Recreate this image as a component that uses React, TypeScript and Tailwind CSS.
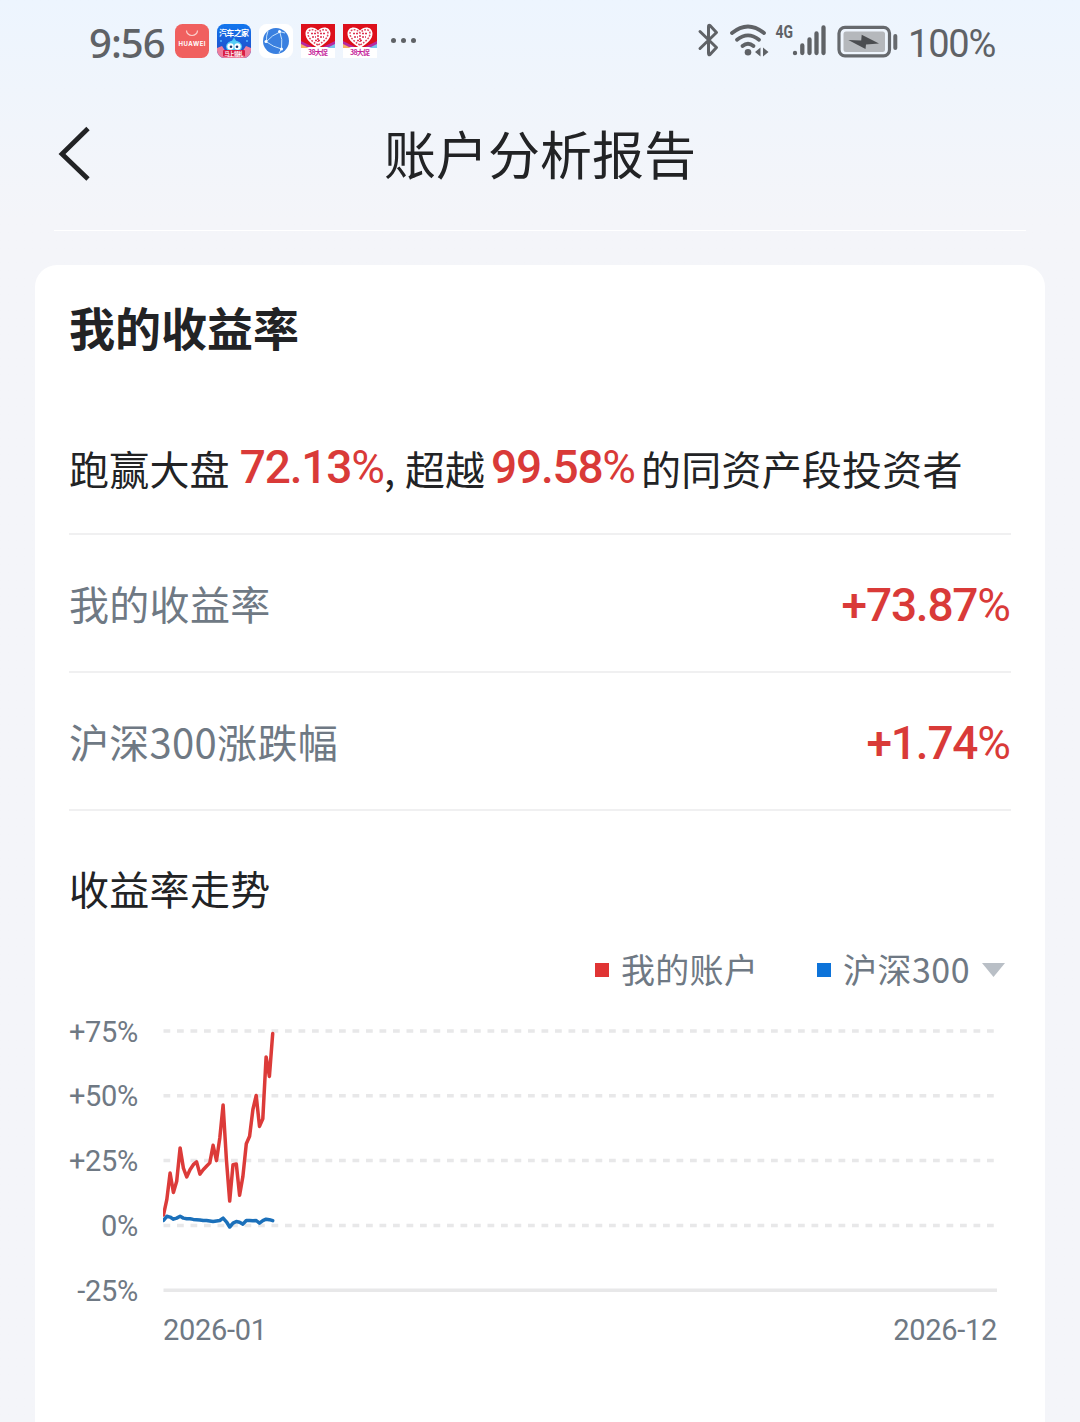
import React from 'react';

const GRID_LABELS = ['+75%', '+50%', '+25%', '0%', '-25%'];

const ACCOUNT = [
  4, 9.9, 20.2, 12.7, 17, 29.9, 22.1, 18.7, 21.5, 23.4, 24.5, 19.8, 21.5, 22.8, 24.1, 30.9, 25,
  33.7, 46.5, 25.4, 9.4, 23.4, 23.7, 11.6, 18.9, 31.5, 34.4, 44.7, 50.1, 38.2, 41.1, 65, 57.5, 74,
];

const CSI300 = [
  1.9, 3.5, 3.2, 2.4, 2.8, 3.5, 2.8, 2.6, 2.6, 2.3, 2.2, 2.1, 1.9, 1.9, 1.7, 1.5, 1.7, 1.9, 2.8,
  1.4, -0.6, 0.9, 1.5, 1.2, 0.5, 1.9, 1.9, 1.8, 1.9, 0.9, 1.8, 2.4, 2.2, 1.8,
];

const STEP_X = 3.31;
const ROW_HEIGHT = 64.8;

const toPoints = (values: number[]) =>
  values
    .map((v, i) => `${(0.5 + i * STEP_X).toFixed(1)},${(32 + ((75 - v) / 25) * ROW_HEIGHT).toFixed(1)}`)
    .join(' ');

const HuaweiIcon = () => (
  <svg className="h-[34px] w-[34px]" viewBox="0 0 34 34">
    <rect width="34" height="34" rx="7.5" fill="#f0605f" />
    <path d="M11.5 6.5a5.5 5 0 0 0 11 0" fill="none" stroke="#fbd0cd" strokeWidth="1.2" />
    <text x="17" y="21.6" textAnchor="middle" fontSize="6" fontWeight="700" fill="#fff" textLength="27" fontFamily="Inter, sans-serif">
      HUAWEI
    </text>
  </svg>
);

const AutohomeIcon = () => (
  <svg className="h-[34px] w-[34px]" viewBox="0 0 34 34">
    <defs>
      <linearGradient id="auto-bg" x1="0" y1="0" x2="0" y2="1">
        <stop offset="0" stopColor="#1277ee" />
        <stop offset="1" stopColor="#2447c4" />
      </linearGradient>
      <clipPath id="auto-clip">
        <rect width="34" height="34" rx="7.5" />
      </clipPath>
    </defs>
    <g clipPath="url(#auto-clip)">
      <rect width="34" height="34" fill="url(#auto-bg)" />
      <circle cx="4" cy="17" r="1" fill="#58b7ff" />
      <circle cx="30" cy="17" r="1" fill="#58b7ff" />
      <path d="M17 13.5l2.5 4h-5z" fill="#42c7f5" />
      <ellipse cx="17" cy="22.5" rx="8" ry="6" fill="#55cbf5" />
      <ellipse cx="13.5" cy="22.5" rx="3.2" ry="3.3" fill="#fff" />
      <ellipse cx="20.5" cy="22.5" rx="3.2" ry="3.3" fill="#fff" />
      <circle cx="14" cy="22.8" r="1.3" fill="#183873" />
      <circle cx="20" cy="22.8" r="1.3" fill="#183873" />
      <path d="M0 24l5-2 3 4.500h18l3-4.500 5 2v10H0z" fill="#ee7d9c" />
      <rect x="6" y="26" width="22" height="6.5" rx="1" fill="#d81e45" />
    </g>
    <text x="17" y="11.6" textAnchor="middle" fontSize="8" fontWeight="700" fill="#fff" textLength="30" fontFamily="'Noto Sans CJK SC', sans-serif">
      汽车之家
    </text>
    <text x="17" y="31.6" textAnchor="middle" fontSize="5.2" fontWeight="700" fill="#fff" textLength="19" fontFamily="'Noto Sans CJK SC', sans-serif">
      马上领礼
    </text>
  </svg>
);

const BrowserIcon = () => (
  <svg className="h-[34px] w-[34px]" viewBox="0 0 34 34">
    <rect width="34" height="34" rx="7.5" fill="#fff" />
    <circle cx="17" cy="17" r="13" fill="#3a80e0" />
    <g fill="none" stroke="#c5e2fc" strokeWidth="1">
      <path d="M9 7Q7 12 7.500 17.500Q13 11 21 8" />
      <path d="M20.500 7Q24 15 22.500 25Q14 23 7 17.500" />
      <path d="M26 9L20.500 7.500M22.500 25L20 29" />
    </g>
    <circle cx="20.500" cy="7.500" r="1.500" fill="#fff" />
    <circle cx="7" cy="17.500" r="1.500" fill="#fff" />
    <circle cx="22.500" cy="25" r="1.500" fill="#fff" />
  </svg>
);

const PromoIcon = () => (
  <svg className="h-[34px] w-[34px]" viewBox="0 0 34 34">
    <rect width="34" height="34" fill="#fff" />
    <path d="M0 0h34v20l-8 3H8l-8-3z" fill="#dd101b" />
    <path d="M0 17l12 6H0z" fill="#b62aa0" />
    <path d="M34 17l-12 6h12z" fill="#b62aa0" />
    <path d="M0 20l8 4H0z" fill="#f7b267" />
    <path d="M34 20l-8 4h8z" fill="#79c5ec" />
    <path d="M17 24C9 19 4.500 15 4.500 9.500C4.500 2.500 13 1.500 17 6.500C21 1.500 29.500 2.500 29.500 9.500C29.500 15 25 19 17 24z" fill="#fff" />
    <path
      d="M17 21C10 17 7 13 7 9.500C7 5 13 4 17 9C21 4 27 5 27 9.500C27 13 24 17 17 21z"
      fill="none"
      stroke="#e0455c"
      strokeWidth="1.500"
      strokeDasharray="1.800 1.300"
    />
    <path d="M10 9.500h5M19 9.500h5M11 13h4M19 13h4M14 16.500h6M17 11v7" stroke="#dd3050" strokeWidth="1.500" strokeDasharray="2 1" />
    <text x="17" y="31" textAnchor="middle" fontSize="7" fontWeight="700" fill="#c5269b" textLength="20" fontFamily="'Noto Sans CJK SC', sans-serif">
      38大促
    </text>
  </svg>
);

const StatusIcons = () => (
  <svg className="h-[44px] w-[202px]" viewBox="0 0 202 44" fill="none">
    {/* bluetooth */}
    <path
      d="M3 11.500L19.500 27.500L13 34.500Q11.500 35.500 11.500 33V7Q11.500 4.500 13 5.500L19.500 12.500L3 28.500"
      stroke="#5f6266"
      strokeWidth="3"
      strokeLinecap="round"
      strokeLinejoin="round"
    />
    {/* wifi */}
    <g stroke="#5f6266" strokeWidth="3.800" strokeLinecap="round">
      <path d="M35 13Q51 0 67 13" />
      <path d="M40 19.800Q51 11 62 19.800" />
      <path d="M45.500 26Q51 21.500 56.500 26" />
    </g>
    <circle cx="51" cy="32.300" r="3.300" fill="#5f6266" />
    <path d="M63.500 27.500v9l-5.500-4.500zM66 27.500v9l5.500-4.500z" fill="#5f6266" />
    {/* mobile signal */}
    <text x="78.500" y="18" fontSize="19" fontWeight="700" fill="#5f6266" textLength="17.500" lengthAdjust="spacingAndGlyphs" fontFamily="Roboto, sans-serif">
      4G
    </text>
    <g stroke="#5f6266" strokeWidth="4.300" strokeLinecap="round">
      <path d="M98 33v.2M105.300 25.500v7.500M112.500 19.500v13.500M119.500 13.500v19.500M126.500 7.500v25.500" />
    </g>
    {/* battery */}
    <rect x="142" y="7.300" width="50.500" height="28.500" rx="6" stroke="#66696d" strokeWidth="3.200" />
    <rect x="146.500" y="11.500" width="41.500" height="20.500" rx="2.500" fill="#b5b8bc" />
    <path d="M151.300 20L164.200 20.500L164.700 14.800L182 23.500L169 24.500L168.500 29z" fill="#4b4d50" />
    <path d="M198.300 16v12" stroke="#66696d" strokeWidth="4" strokeLinecap="round" />
  </svg>
);

const StatusBar = () => (
  <div className="flex h-[84px] items-center justify-between pl-[89px] pr-[85px] font-['Noto_Sans',sans-serif] text-[40px] text-[#5f6266]">
    <div className="flex items-center">
      <span className="mt-[2px] w-[86px] font-medium tracking-[-1px]">9:56</span>
      <div className="-mt-[3px] flex gap-2">
        <HuaweiIcon />
        <AutohomeIcon />
        <BrowserIcon />
        <PromoIcon />
        <PromoIcon />
      </div>
      <div className="-mt-[3px] ml-[14px] flex gap-[5px]">
        <span className="h-[5px] w-[5px] rounded-full bg-[#5f6266]" />
        <span className="h-[5px] w-[5px] rounded-full bg-[#5f6266]" />
        <span className="h-[5px] w-[5px] rounded-full bg-[#5f6266]" />
      </div>
    </div>
    <div className="flex items-center">
      <StatusIcons />
      <span className="ml-[9px] mt-[4px] w-[87px] whitespace-nowrap font-[Roboto,sans-serif] text-[38px] tracking-[-1.200px]">100%</span>
    </div>
  </div>
);

// number in medium weight, percent sign in regular
const Rate = ({ value, className = '' }: { value: string; className?: string }) => (
  <span className={`font-[Roboto,sans-serif] text-[46px] font-medium tracking-[-1.200px] text-[#d93a38] ${className}`}>
    {value}
    <span className="font-normal tracking-[-1px]">%</span>
  </span>
);

const RateRow = ({ label, value }: { label: string; value: string }) => (
  <div className="flex h-[138px] items-center justify-between border-b-2 border-[#f0f0f1]">
    <span className="text-[40px] tracking-[0.300px] text-[#6f7984]">{label}</span>
    <Rate value={value} className="mr-[1px] mt-[4px]" />
  </div>
);

const Legend = () => (
  <div className="flex h-[46px] items-center justify-end pr-[6px] text-[34px] text-[#6f7984]">
    <span className="mr-[12px] mt-[6px] h-[14px] w-[14px] bg-[#e03434]" />
    <span className="mt-[2px] w-[196px] tracking-[0.300px]">我的账户</span>
    <span className="mr-[12px] mt-[6px] h-[14px] w-[14px] bg-[#0d73d9]" />
    <span className="mt-[2px] w-[139px] tracking-[0.500px]">沪深300</span>
    <svg className="mt-[6px] h-[14px] w-[23px]" viewBox="0 0 23 14">
      <path d="M0 0h23L11.500 14z" fill="#b9bfc6" />
    </svg>
  </div>
);

const TrendChart = () => (
  <div className="mt-[9px] font-[Roboto,sans-serif] text-[29px] text-[#6f7984]">
    <div className="flex">
      <div className="flex w-[69px] flex-col pt-px text-right">
        {GRID_LABELS.map((label) => (
          <span key={label} className="flex h-[64.8px] items-center justify-end whitespace-nowrap tracking-[-0.300px]">
            {label}
          </span>
        ))}
      </div>
      <svg className="ml-[25px] h-[324px] w-[835px]" viewBox="0 0 835 324" fill="none">
        {GRID_LABELS.map((label, i) => (
          <path
            key={label}
            d={`M0.500 ${32 + i * ROW_HEIGHT}H834`}
            stroke="#e8e8e9"
            strokeWidth="3.500"
            strokeDasharray={i < 4 ? '6.75 6.75' : undefined}
          />
        ))}
        <polyline points={toPoints(ACCOUNT)} stroke="#dc3b39" strokeWidth="3.500" strokeLinejoin="round" strokeLinecap="round" />
        <polyline points={toPoints(CSI300)} stroke="#1b70ba" strokeWidth="3.500" strokeLinejoin="round" strokeLinecap="round" />
      </svg>
    </div>
    <div className="-mt-[10px] flex justify-between pl-[94px] pr-[14px] leading-[32px] tracking-[-0.300px]">
      <span>2026-01</span>
      <span>2026-12</span>
    </div>
  </div>
);

const App = () => {
  return (
    <div className="flex h-[1422px] w-[1080px] flex-col overflow-hidden bg-[#f3f5fa] bg-linear-to-b from-[#edf5fe] to-[#f4f5f9] to-[220px] font-['Noto_Sans_CJK_SC',sans-serif] text-[#222325]">
      <StatusBar />
      <header className="mx-[54px] flex h-[147px] items-center justify-between border-b border-white pb-[7px]">
        <svg className="h-[60px] w-[40px]" viewBox="0 0 40 60" fill="none">
          <path d="M34 4.500L8 30L34 55" stroke="#222325" strokeWidth="4.800" />
        </svg>
        <h1 className="-mt-[2px] text-[52px]">账户分析报告</h1>
        <span className="w-[40px]" />
      </header>
      <main className="mx-[35px] mt-[34px] flex-1 rounded-t-[22px] bg-white px-[34px]">
        <h2 className="flex h-[120px] items-center pt-[2px] text-[46px] font-bold">我的收益率</h2>
        <div className="flex h-[150px] items-center whitespace-nowrap border-b-2 border-[#f0f0f1] pt-[17px] text-[40px]">
          <span className="tracking-[0.200px]">跑赢大盘</span>
          <Rate value="72.13" className="ml-[10px]" />
          <span>,</span>
          <span className="ml-[10px]">超越</span>
          <Rate value="99.58" className="ml-[6px]" />
          <span className="ml-[6px] tracking-[0.200px]">的同资产段投资者</span>
        </div>
        <RateRow label="我的收益率" value="+73.87" />
        <RateRow label="沪深300涨跌幅" value="+1.74" />
        <h3 className="flex h-[133px] items-center pt-[20px] text-[40px] tracking-[0.300px]">收益率走势</h3>
        <Legend />
        <TrendChart />
      </main>
    </div>
  );
};

export default App;
